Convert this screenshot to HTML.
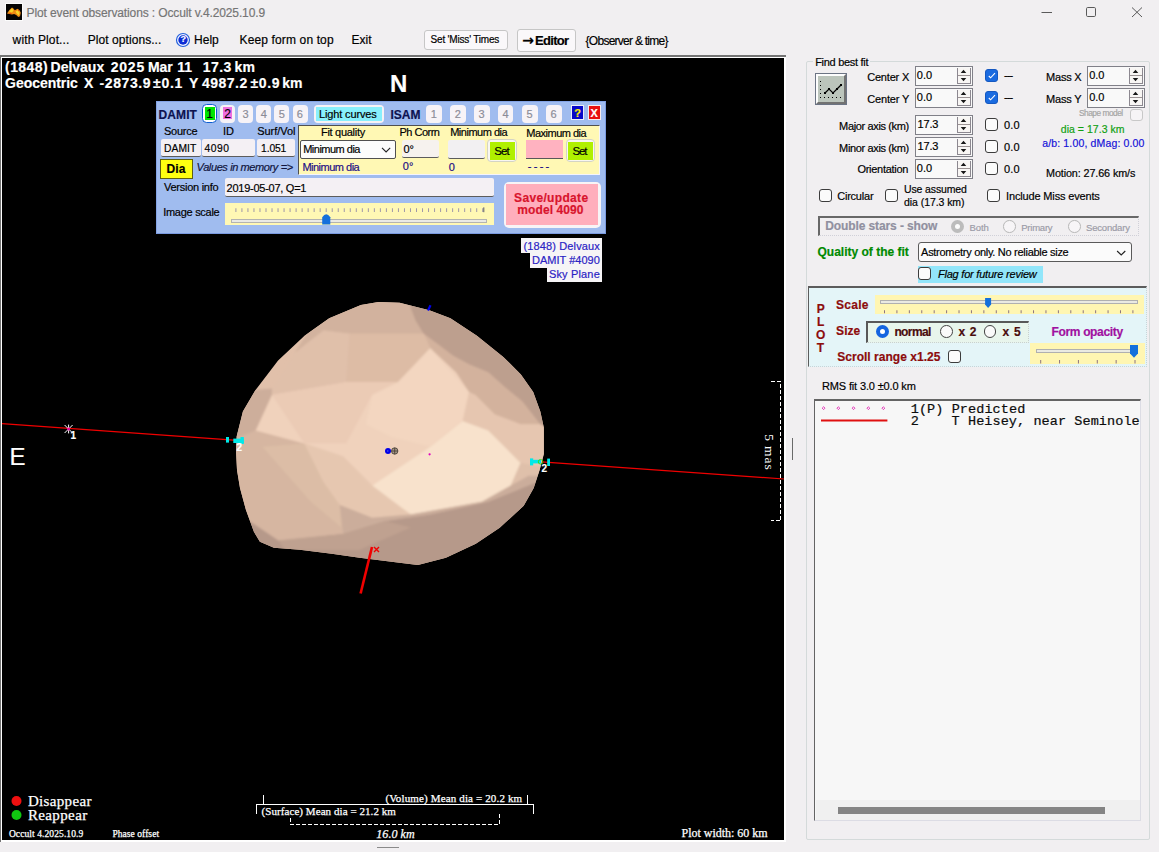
<!DOCTYPE html>
<html lang="en"><head><meta charset="utf-8"><title>Plot event observations : Occult v.4.2025.10.9</title>
<style>
html,body{margin:0;padding:0}
body{width:1159px;height:852px;overflow:hidden;background:#f1eff1;font-family:"Liberation Sans",sans-serif}
#win{position:absolute;left:0;top:0;width:1159px;height:852px;overflow:hidden;background:#f1eff1}
.t{position:absolute;white-space:pre;line-height:1;font-size:11px;color:#000;-webkit-text-stroke:0.18px currentColor}
.a{position:absolute;box-sizing:border-box}
svg{position:absolute;left:0;top:0;overflow:visible}
.num{background:#f9f9f9;border:1px solid #808088;}
.spin{background:#f8f6f4;border:1px solid #8c8890;border-top:none}
.cb{background:#fbfbfb;border:1px solid #3c3c3c;border-radius:3px;width:13px;height:13px}
.cbc{background:#1a6be0;border:1px solid #1558c0;border-radius:3px;width:13px;height:13px}
.rb{background:#fafafa;border:1px solid #444;border-radius:50%;width:13px;height:13px}
.fld{background:#f4f0f4;border-bottom:1.4px solid #5c5c5c;border-radius:2px}
.nb{background:#f7f3f7;border-radius:3px}
.t[style*="Serif"]{-webkit-text-stroke:0.25px currentColor}
.p{display:inline-block;width:0;height:0}

</style></head>
<body>
<div id="win">
<!-- title bar icon -->
<div class="a" style="left:5px;top:3px;width:18px;height:18px;background:#fcfcfc"></div><div class="a" style="left:6px;top:4px;width:16px;height:16px;background:#060404"></div>
<svg width="1159" height="852" viewBox="0 0 1159 852">
<path d="M7 13.4 L9.2 10.2 L12 7.4 L13.4 8.5 L14.8 10.2 L17.6 8.8 L19.7 10.6 L20.8 12.7 L20 16.2 L18.3 16.9 L16.2 15.1 L14.1 14.1 L12 14.4 L9.2 14.1 Z" fill="#f08c14"/>
<path d="M9 11.5 L12 8.2 L13.6 10.5 L12 12.5 Z M15.5 11.5 L18 10.2 L19.5 13 L18.8 15.4 L16.6 13.6 Z" fill="#f8d428"/>
<path d="M9 13.3 L11.5 13 L11.5 14 L9.4 13.9 Z M17.8 9.3 L19.4 10.7 L18.4 11.2 Z" fill="#e84810"/>
<!-- window controls -->
<path d="M1041.5 12.5 H1052" stroke="#5a5a5a" stroke-width="1" fill="none"/>
<rect x="1086.5" y="7.5" width="9" height="9" rx="1.2" stroke="#5a5a5a" stroke-width="1" fill="none"/>
<path d="M1132 7.5 L1142 17 M1142 7.5 L1132 17" stroke="#5a5a5a" stroke-width="1" fill="none"/>
<!-- help icon -->
<circle cx="183" cy="40" r="6.5" fill="#f4f6ff" stroke="#2460dc" stroke-width="1.2"/>
<circle cx="183" cy="40" r="4.7" fill="#0c2cd4"/>
</svg>
<span class="t" style="left:180.5px;top:35.3px;font-size:9px;font-weight:bold;color:#fff">?</span>
<!-- toolbar buttons -->
<div class="a" style="left:424px;top:30px;width:84px;height:20px;background:#faf8fa;border:1px solid #c6c6c6;border-radius:3px"></div>
<div class="a" style="left:517px;top:29px;width:59px;height:23px;background:#faf8fa;border:1px solid #c6c6c6;border-radius:3px"></div>
<!-- plot frame -->
<div class="a" style="left:0;top:55px;width:786px;height:787px;background:#fff;border-top:2px solid #747474;border-left:1px solid #747474"></div>
<div class="a" style="left:2px;top:58px;width:782px;height:782px;background:#000"></div>
<div class="a" style="left:377px;top:847px;width:22px;height:1px;background:#8a8a8a"></div>
<div class="a" style="left:792px;top:438px;width:1px;height:22px;background:#6a6a6a"></div>
<!-- plot graphics -->
<svg width="1159" height="852" viewBox="0 0 1159 852">
<defs>
<radialGradient id="ag" gradientUnits="userSpaceOnUse" cx="440" cy="440" r="190">
<stop offset="0" stop-color="#f8dcc6"/><stop offset="0.45" stop-color="#eeccb6"/><stop offset="0.8" stop-color="#dcb8a2"/><stop offset="1" stop-color="#c8a692"/>
</radialGradient>
<filter id="sf" x="-5%" y="-5%" width="110%" height="110%"><feGaussianBlur stdDeviation="0.9"/></filter>
<clipPath id="ac"><path id="ao" d="M378.5 302 L399.6 302.7 L429.3 310.3 L450.4 318.2 L476.9 335.8 L503.3 356.9 L520.9 374.5 L533.2 392.1 L540.3 411.5 L543.8 427.4 L543.8 454 L539.6 470 L533.7 487.9 L523.7 505.8 L499.7 527.8 L475.8 543.8 L445.9 557.7 L417.9 565.1 L399.6 562.7 L359.7 557.7 L331.8 553.7 L299.8 549.7 L273.9 547.7 L259.9 541.8 L253.9 531.8 L245.9 509.8 L240 487.9 L237 469.9 L236 450 L236.7 436.2 L242.9 411.5 L255.2 390.4 L278.1 360.4 L304.5 335.8 L329.2 318.2 L360.9 305 Z"/></clipPath>
</defs>
<!-- chord line -->
<path d="M2 423.7 L237 440.3 M538 461.6 L784 479" stroke="#f00000" stroke-width="1.2" fill="none"/>
<!-- asteroid -->
<use href="#ao" fill="#e1c0aa"/>
<g clip-path="url(#ac)"><g filter="url(#sf)">
<path d="M310.7 327.3 L359.2 295.0 L436.7 295.0 L436.7 343.4 L423.7 333.7 L349.5 333.7 L323.6 330.5 L294.6 353.1 Z" fill="#d2b29e"/>
<path d="M410.8 295.0 L552.9 295.0 L552.9 430.6 L540.0 424.2 L522.2 401.6 L504.5 387.0 L488.3 372.5 L468.9 364.4 L452.8 355.7 L436.7 343.4 L423.7 333.7 L415.7 320.8 L410.8 307.9 Z" fill="#bd9f8e"/>
<path d="M423.7 333.7 L436.7 343.4 L452.8 355.7 L468.9 364.4 L488.3 372.5 L504.5 387.0 L522.2 401.6 L540.0 424.2 L520.6 424.2 L494.8 414.5 L475.4 395.1 L468.9 391.9 L456.0 372.5 L430.2 348.3 Z" fill="#d3b29d"/>
<path d="M475.4 395.1 L494.8 414.5 L520.6 424.2 L540.0 424.2 L552.9 430.6 L552.9 469.4 L520.6 462.9 L488.3 430.6 L462.5 420.9 L468.9 391.9 Z" fill="#e6c6b0"/>
<path d="M272.0 388.6 L294.6 353.1 L323.6 330.5 L349.5 333.7 L346.2 382.2 L272.0 395.1 Z" fill="#e0c0aa"/>
<path d="M349.5 333.7 L423.7 333.7 L430.2 348.3 L397.9 382.2 L346.2 382.2 Z" fill="#ddbca5"/>
<path d="M230.0 443.5 L230.0 391.9 L272.0 388.6 L272.0 395.1 L255.8 430.6 L238.1 440.3 Z" fill="#cdae9b"/>
<path d="M230.0 440.3 L255.8 430.6 L304.3 443.5 L323.6 482.3 L339.8 504.9 L343.0 533.9 L278.4 540.4 L230.0 540.4 Z" fill="#d6b6a1"/>
<path d="M262.3 446.8 L304.3 443.5 L323.6 482.3 L339.8 504.9 L341.4 527.5 L310.7 501.7 Z" fill="#dcbda6"/>
<path d="M272.0 395.1 L346.2 382.2 L397.9 382.2 L430.2 348.3 L456.0 372.5 L468.9 391.9 L462.5 420.9 L430.2 446.8 L372.1 485.5 L343.0 456.4 L304.3 443.5 L255.8 430.6 Z" fill="#f0d2bc"/>
<path d="M346.2 382.2 L397.9 382.2 L372.1 395.1 L346.2 443.5 L304.3 443.5 L272.0 395.1 Z" fill="#ebcbb5"/>
<path d="M343.0 456.4 L372.1 485.5 L410.8 514.6 L372.1 517.8 L339.8 504.9 L323.6 482.3 L304.3 443.5 Z" fill="#e6c7b0"/>
<path d="M430.2 446.8 L462.5 420.9 L488.3 430.6 L520.6 462.9 L510.9 485.5 L481.9 501.7 L410.8 514.6 L372.1 485.5 Z" fill="#f8e2cc"/>
<path d="M520.6 462.9 L552.9 469.4 L552.9 475.8 L528.7 475.8 L510.9 485.5 Z" fill="#dfc0aa"/>
<path d="M372.1 395.1 L397.9 382.2 L430.2 348.3 L468.9 391.9 L462.5 420.9 L430.2 446.8 L391.4 437.1 L365.6 424.2 Z" fill="#f3d6c0"/>
<path d="M339.8 504.9 L372.1 517.8 L410.8 514.6 L481.9 501.7 L510.9 485.5 L528.7 475.8 L552.9 475.8 L552.9 488.7 L520.6 488.7 L488.3 501.7 L430.2 514.6 L385.0 521.0 L343.0 533.9 Z" fill="#cbad9b"/>
<path d="M249.4 521.0 L278.4 540.4 L343.0 533.9 L385.0 521.0 L430.2 514.6 L488.3 501.7 L520.6 488.7 L552.9 475.8 L552.9 585.6 L230.0 585.6 L230.0 521.0 Z" fill="#b6998a"/>
<path d="M278.4 540.4 L343.0 533.9 L385.0 521.0 L410.8 527.5 L359.2 550.1 L284.9 550.1 Z" fill="#bfa190"/>
</g></g>
<!-- markers -->
<path d="M428 310.5 L430.5 305.2" stroke="#0000f0" stroke-width="2.2"/>
<path d="M360.6 593.5 L372 547" stroke="#f00000" stroke-width="2.6"/>
<path d="M374 547 L379 552 M379 547 L374 552" stroke="#f00000" stroke-width="1.4"/>
<circle cx="388" cy="451" r="3" fill="#0000e8"/><circle cx="387.8" cy="451" r="0.7" fill="#5a6af0"/>
<circle cx="394.7" cy="451" r="3.2" fill="#a89888" stroke="#403830" stroke-width="0.8"/>
<path d="M391.5 451 H398 M394.7 447.8 V454.2" stroke="#403830" stroke-width="0.8"/>
<circle cx="429.6" cy="454.3" r="1.1" fill="#e000c0"/>
<!-- star 1 -->
<path d="M68.6 424.6 V433.4 M64.6 425 L72.6 433 M72.6 425 L64.6 433" stroke="#fff" stroke-width="1"/>
<circle cx="68.6" cy="429" r="1.5" fill="#f000a0"/>
<!-- cyan event bars -->
<rect x="226" y="437" width="3" height="5.6" fill="#00e8e8"/>
<rect x="233.3" y="438.6" width="10.5" height="4.4" fill="#00e8e8"/>
<rect x="240.5" y="437" width="3.3" height="7" fill="#00e8e8"/>
<rect x="530" y="459.8" width="11" height="3.6" fill="#00e8e8"/>
<rect x="530" y="458.4" width="3.2" height="7" fill="#00e8e8"/>
<rect x="547.2" y="458.6" width="2.8" height="7.4" fill="#00e8e8"/>
<circle cx="540.6" cy="461.8" r="2.3" fill="none" stroke="#30e000" stroke-width="1" opacity="0.85"/>
<!-- legend dots -->
<circle cx="16.5" cy="801" r="5" fill="#f01010"/>
<circle cx="16.5" cy="815" r="5" fill="#10c810"/>
<!-- scale bars -->
<g stroke="#fff" stroke-width="1" fill="none" shape-rendering="crispEdges">
<path d="M263 795 V804 M527 795 V804 M256 804.5 H534 M256.5 804 V814 M533.5 804 V814"/>
<path d="M290.5 818 V824.5 H499.5 V814" stroke-dasharray="4 2"/>
<path d="M770.5 381.5 H780.5 V520.5 H770.5" stroke-dasharray="4 2"/>
</g>
<text transform="translate(765.3,434.2) rotate(90)" font-family="'Liberation Serif',serif" font-size="13.5" fill="#fff" textLength="35.5" lengthAdjust="spacing">5 mas</text>
</svg>
<!-- sky plane label -->
<div class="a" style="left:521.4px;top:238.2px;width:80.2px;height:15.2px;background:#f6f4f6"></div>
<div class="a" style="left:530.1px;top:253.2px;width:71.5px;height:14.8px;background:#f6f4f6"></div>
<div class="a" style="left:546.5px;top:267.8px;width:55.1px;height:14.5px;background:#f6f4f6"></div>
<!-- DAMIT panel -->
<div class="a" style="left:156px;top:101px;width:450px;height:133px;background:#a0bcef;border:1px solid #84a4e6;border-right-color:#7a9ae0;border-bottom-color:#7a9ae0"></div>
<div class="a" style="left:202px;top:104.3px;width:15.3px;height:18.5px;background:#fff;border:1.6px solid #0c5cd0;border-radius:4.5px"></div>
<div class="a" style="left:205px;top:107px;width:10.1px;height:12.8px;background:#00e400"></div>
<div class="a" style="left:220.3px;top:104.5px;width:14.8px;height:18.2px;background:#f6f2f6;border-radius:4px"></div>
<div class="a" style="left:223.1px;top:107.3px;width:9.3px;height:12.2px;background:#ee6ee0"></div>
<div class="a nb" style="left:238.2px;top:104.5px;width:15.1px;height:18.2px;border-radius:4px"></div>
<div class="a nb" style="left:256.4px;top:104.5px;width:15.1px;height:18.2px;border-radius:4px"></div>
<div class="a nb" style="left:274.4px;top:104.5px;width:15.1px;height:18.2px;border-radius:4px"></div>
<div class="a nb" style="left:292.5px;top:104.5px;width:15.1px;height:18.2px;border-radius:4px"></div>
<div class="a" style="left:313.5px;top:104.5px;width:70.8px;height:18.3px;background:#f6f2f6;border-radius:4px"></div>
<div class="a" style="left:316px;top:107px;width:66.4px;height:14px;background:#88f0fc"></div>
<div class="a nb" style="left:426.2px;top:104.5px;width:15.7px;height:18.2px;border-radius:4px"></div>
<div class="a nb" style="left:450.2px;top:104.5px;width:15.7px;height:18.2px;border-radius:4px"></div>
<div class="a nb" style="left:473.9px;top:104.5px;width:15.7px;height:18.2px;border-radius:4px"></div>
<div class="a nb" style="left:497.8px;top:104.5px;width:15.7px;height:18.2px;border-radius:4px"></div>
<div class="a nb" style="left:522px;top:104.5px;width:15.7px;height:18.2px;border-radius:4px"></div>
<div class="a nb" style="left:545.9px;top:104.5px;width:15.7px;height:18.2px;border-radius:4px"></div>
<div class="a" style="left:571.2px;top:105px;width:13.2px;height:15px;background:#0808c8;border:1px solid #ececf8"></div>
<div class="a" style="left:587.6px;top:105px;width:13.6px;height:15px;background:#e81010;border:1px solid #f8ecec"></div>
<!-- yellow sub panel -->
<div class="a" style="left:297.7px;top:125.4px;width:302.4px;height:49.6px;background:#fff8b4;border-left:1.8px solid #505050;border-top:1.8px solid #505050;border-right:1.5px solid #f4f4fc;border-bottom:1.3px solid #f4f4fc"></div>
<div class="a fld" style="left:161px;top:138.7px;width:39.5px;height:18.3px;"></div>
<div class="a fld" style="left:202px;top:138.7px;width:53.3px;height:18.3px;"></div>
<div class="a fld" style="left:257.3px;top:138.7px;width:37.9px;height:18.3px;"></div>
<div class="a" style="left:300.3px;top:139.6px;width:96.1px;height:19.7px;background:#fcfcfc;border:1px solid #505050;border-radius:2px"></div>
<div class="a fld" style="left:401.7px;top:139.6px;width:37.7px;height:18.4px;background:#f6f2ee"></div>
<div class="a fld" style="left:447.8px;top:139.6px;width:37.5px;height:19px;background:#f2f0f2"></div>
<div class="a" style="left:487.4px;top:139.2px;width:29.9px;height:23.3px;background:#f8f6f2;border:1px solid #d4d4c4;border-radius:4px"></div>
<div class="a" style="left:490px;top:141.8px;width:25.3px;height:18px;background:#b0f000"></div>
<div class="a" style="left:526.2px;top:140.2px;width:36.5px;height:18.6px;background:#ffb2c0;border-bottom:1.4px solid #585858"></div>
<div class="a" style="left:565.5px;top:139.2px;width:29.8px;height:23.3px;background:#f8f6f2;border:1px solid #d4d4c4;border-radius:4px"></div>
<div class="a" style="left:568.1px;top:141.8px;width:24.9px;height:18px;background:#b0f000"></div>
<div class="a" style="left:159.5px;top:158.6px;width:33.7px;height:20.2px;background:#ffff10;border:1px solid #606010"></div>
<div class="a fld" style="left:224.7px;top:178.4px;width:268.9px;height:18.2px;"></div>
<div class="a" style="left:225px;top:203.3px;width:269px;height:21.7px;background:#fff8b4"></div>
<div class="a" style="left:231.2px;top:219.4px;width:255.4px;height:4.1px;background:#eaeae4;border:1px solid #b4b4b0"></div>
<div class="a" style="left:503.7px;top:181.6px;width:97px;height:46.1px;background:#f8f4f6;border-radius:5px"></div>
<div class="a" style="left:506px;top:183.9px;width:92.1px;height:41.5px;background:#ffaebc"></div>
<svg width="1159" height="852" viewBox="0 0 1159 852">
<path d="M382 147.8 L386.1 152 L390.2 147.8" stroke="#222" stroke-width="1.1" fill="none"/>
<path d="M322.2 224.6 V217.2 Q326.2 211.5 330.3 217.2 V224.6 Z" fill="#1470dc"/>
<path d="M235.4 210.2 H483" stroke="#a098a8" stroke-width="3.8" stroke-dasharray="1 5.02" fill="none"/>
<path d="M483.8 207.4 V212.2" stroke="#55556a" stroke-width="1"/>
</svg>
<!-- right panel group box -->
<div class="a" style="left:806px;top:61px;width:344px;height:779px;border:1px solid #d4dada;border-radius:2px"></div>
<div class="a" style="left:813px;top:56px;width:57px;height:12px;background:#f1eff1"></div>
<!-- fit button -->
<div class="a" style="left:815px;top:73px;width:32px;height:32px;background:#6c7484"></div><div class="a" style="left:816px;top:74px;width:30px;height:30px;background:#bcc5bc;border:2px solid;border-color:#fdfdfd #727272 #727272 #fdfdfd"></div>
<!-- numeric boxes -->
<div class="a num" style="left:915px;top:66px;width:58px;height:20px;"></div>
<div class="a spin" style="left:957px;top:68px;width:14px;height:16px;"></div>
<div class="a" style="left:958px;top:75px;width:12px;height:1px;background:#9c9494"></div>
<div class="a num" style="left:915px;top:88px;width:58px;height:20px;"></div>
<div class="a spin" style="left:957px;top:90px;width:14px;height:16px;"></div>
<div class="a" style="left:958px;top:97px;width:12px;height:1px;background:#9c9494"></div>
<div class="a num" style="left:915px;top:115px;width:58px;height:20px;"></div>
<div class="a spin" style="left:957px;top:117px;width:14px;height:16px;"></div>
<div class="a" style="left:958px;top:124px;width:12px;height:1px;background:#9c9494"></div>
<div class="a num" style="left:915px;top:137px;width:58px;height:20px;"></div>
<div class="a spin" style="left:957px;top:139px;width:14px;height:16px;"></div>
<div class="a" style="left:958px;top:146px;width:12px;height:1px;background:#9c9494"></div>
<div class="a num" style="left:915px;top:159px;width:58px;height:20px;"></div>
<div class="a spin" style="left:957px;top:161px;width:14px;height:16px;"></div>
<div class="a" style="left:958px;top:168px;width:12px;height:1px;background:#9c9494"></div>
<div class="a num" style="left:1087px;top:66px;width:58px;height:20px;"></div>
<div class="a spin" style="left:1129px;top:68px;width:14px;height:16px;"></div>
<div class="a" style="left:1130px;top:75px;width:12px;height:1px;background:#9c9494"></div>
<div class="a num" style="left:1087px;top:88px;width:58px;height:20px;"></div>
<div class="a spin" style="left:1129px;top:90px;width:14px;height:16px;"></div>
<div class="a" style="left:1130px;top:97px;width:12px;height:1px;background:#9c9494"></div>
<!-- checkboxes -->
<div class="a cbc" style="left:985px;top:69px;width:13px;height:13px;"></div>
<div class="a cbc" style="left:985px;top:91px;width:13px;height:13px;"></div>
<div class="a cb" style="left:985px;top:118px;width:13px;height:13px;"></div>
<div class="a cb" style="left:985px;top:140px;width:13px;height:13px;"></div>
<div class="a cb" style="left:985px;top:162px;width:13px;height:13px;"></div>
<div class="a cb" style="left:1130.4px;top:108.8px;width:12.6px;height:12px;border-color:#c8c8c8;background:#f6f4f6"></div>
<div class="a cb" style="left:819px;top:189px;width:13px;height:13px;"></div>
<div class="a cb" style="left:885px;top:189px;width:13px;height:13px;"></div>
<div class="a cb" style="left:987px;top:189px;width:13px;height:13px;"></div>
<!-- double stars box -->
<div class="a" style="left:817.5px;top:215.5px;width:321.5px;height:20px;border-top:2px solid #686868;border-left:2px solid #686868;border-right:1px dotted #d0d0d8;border-bottom:1px dotted #d0d0d8"></div>
<div class="a rb" style="left:950.7px;top:220.1px;width:13px;height:13px;border:4px solid #bcbcbc;background:#fcfcfc"></div>
<div class="a rb" style="left:1003.2px;top:220px;width:12.6px;height:12.6px;border-color:#b8b8b8;background:#f7f5f7"></div>
<div class="a rb" style="left:1068.1px;top:220px;width:12.6px;height:12.6px;border-color:#b8b8b8;background:#f7f5f7"></div>
<!-- quality combo -->
<div class="a" style="left:918.4px;top:242px;width:213.2px;height:20.4px;background:#fbfbfb;border:1px solid #5a5a5a;border-radius:3px"></div>
<div class="a" style="left:918px;top:266px;width:125px;height:16.5px;background:#92e6fa"></div>
<div class="a cb" style="left:918.4px;top:267.2px;width:12.6px;height:12.6px;"></div>
<!-- PLOT panel -->
<div class="a" style="left:808.4px;top:286.3px;width:338.4px;height:81.2px;background:#e4f5f8;border-top:2px solid #5c5c5c;border-left:1.6px solid #5c5c5c;border-right:1px dotted #c8d4d8;border-bottom:1px dotted #c8d4d8"></div>
<div class="a" style="left:875.2px;top:295.2px;width:268.8px;height:18.4px;background:#fff6b2"></div>
<div class="a" style="left:880px;top:299.8px;width:258.2px;height:4.6px;background:#eaeae2;border:1px solid #b0b0b0"></div>
<div class="a" style="left:866.3px;top:320.5px;width:162.6px;height:22px;background:#e8f5ec;border-top:2px solid #585858;border-left:2px solid #585858;border-right:1px dotted #c8d0d0;border-bottom:1px dotted #c8d0d0"></div>
<div class="a rb" style="left:875.8px;top:325.2px;width:13px;height:13px;background:#fff;border:4px solid #1464e0"></div>
<div class="a rb" style="left:940px;top:325.4px;width:12.6px;height:12.6px;"></div>
<div class="a rb" style="left:983.9px;top:325.4px;width:12.6px;height:12.6px;"></div>
<div class="a cb" style="left:948.2px;top:350.4px;width:12.6px;height:12.6px;"></div>
<div class="a" style="left:1029.8px;top:343px;width:114.8px;height:21px;background:#fff6b2"></div>
<div class="a" style="left:1036px;top:348.8px;width:101.6px;height:4.4px;background:#eaeae2;border:1px solid #b0b0b0"></div>
<!-- list box -->
<div class="a" style="left:814.3px;top:399.2px;width:326.7px;height:422px;background:#f7f7f7;border-top:2px solid #646464;border-left:1.8px solid #646464;border-right:1px solid #dcdce4;border-bottom:1px solid #dcdce4"></div>
<div class="a" style="left:816.2px;top:800px;width:324px;height:20px;background:#f0f0f0"></div>
<div class="a" style="left:838.3px;top:807px;width:266.8px;height:7px;background:#848484"></div>
<svg width="1159" height="852" viewBox="0 0 1159 852">
<g fill="#000" shape-rendering="crispEdges"><path d="M820 81 h1 v1 h-1z M820 85 h1 v1 h-1z M820 89 h1 v1 h-1z M820 93 h1 v1 h-1z M820 97 h1 v1 h-1z M824 97 h1 v1 h-1z M828 97 h1 v1 h-1z M832 97 h1 v1 h-1z M836 97 h1 v1 h-1z M840 97 h1 v1 h-1z M824 92 h2 v2 h-2z M828 88 h2 v2 h-2z M832 92 h2 v2 h-2z M836 88 h2 v2 h-2z M840 84 h2 v2 h-2z "/></g>
<path d="M825 93 L829 89 L833 93 L837 89 L841 85" stroke="#000" stroke-width="1.2" fill="none"/>
<g fill="#181818">
<path d="M960.7 73 L963.5 69.8 L966.3 73 Z M960.7 78 L963.5 81.2 L966.3 78 Z"/>
<path d="M960.7 95 L963.5 91.8 L966.3 95 Z M960.7 100 L963.5 103.2 L966.3 100 Z"/>
<path d="M960.7 122 L963.5 118.8 L966.3 122 Z M960.7 127 L963.5 130.2 L966.3 127 Z"/>
<path d="M960.7 144 L963.5 140.8 L966.3 144 Z M960.7 149 L963.5 152.2 L966.3 149 Z"/>
<path d="M960.7 166 L963.5 162.8 L966.3 166 Z M960.7 171 L963.5 174.2 L966.3 171 Z"/>
<path d="M1132.7 73 L1135.5 69.8 L1138.3 73 Z M1132.7 78 L1135.5 81.2 L1138.3 78 Z"/>
<path d="M1132.7 95 L1135.5 91.8 L1138.3 95 Z M1132.7 100 L1135.5 103.2 L1138.3 100 Z"/>
</g>
<path d="M988.8 76 L990.6 77.8 L995 73.2 M988.8 98 L990.6 99.8 L995 95.2" stroke="#fff" stroke-width="1.1" fill="none"/>
<path d="M1117.1 251 L1121.2 255 L1125.3 251" stroke="#222" stroke-width="1.1" fill="none"/>
<path d="M985.1 298 H991.1 V304.6 L988.1 308 L985.1 304.6 Z" fill="#1470dc"/>
<path d="M884 311.8 H1137" stroke="#8c7480" stroke-width="3" stroke-dasharray="1 11.42" fill="none"/>
<path d="M1130 345 H1138 V353.6 L1134 357.8 L1130 353.6 Z" fill="#1470dc"/>
<path d="M1040.2 361.8 H1136" stroke="#8c7480" stroke-width="3.4" stroke-dasharray="1 17.86" fill="none"/>
<g fill="none" stroke="#e020b0" stroke-width="0.9"><path d="M822.2 408.2 L823.6 406.8 L825.0 408.2 L823.6 409.6 Z"/><path d="M837.0 408.2 L838.4 406.8 L839.8 408.2 L838.4 409.6 Z"/><path d="M852.1 408.2 L853.5 406.8 L854.9 408.2 L853.5 409.6 Z"/><path d="M867.0 408.2 L868.4 406.8 L869.8 408.2 L868.4 409.6 Z"/><path d="M882.0 408.2 L883.4 406.8 L884.8 408.2 L883.4 409.6 Z"/></g>
<path d="M821 420.5 H887.4" stroke="#e01010" stroke-width="2"/>
</svg>

<span class="t" style='left:26.6px;top:7.0px;font-size:12px;color:#757575;letter-spacing:-0.12px;'>Plot event observations : Occult v.4.2025.10.9</span>
<span class="t" style='left:12.6px;top:34.0px;font-size:12px;letter-spacing:0.13px;'>with Plot...</span>
<span class="t" style='left:87.8px;top:34.0px;font-size:12px;letter-spacing:0.06px;'>Plot options...</span>
<span class="t" style='left:194.1px;top:34.0px;font-size:12px;'>Help</span>
<span class="t" style='left:239.6px;top:34.0px;font-size:12px;letter-spacing:0.13px;'>Keep form on top</span>
<span class="t" style='left:351.6px;top:34.0px;font-size:12px;letter-spacing:-0.01px;'>Exit</span>
<span class="t" style='left:430.6px;top:35.0px;font-size:10px;letter-spacing:-0.19px;'>Set 'Miss' Times</span>
<span class="t" style='left:522.2px;top:33.0px;font-size:14px;font-family:"DejaVu Sans","Liberation Sans",sans-serif;font-weight:bold;'>→</span>
<span class="t" style='left:535.1px;top:34.0px;font-size:13px;font-weight:bold;letter-spacing:-0.73px;'>Editor</span>
<span class="t" style='left:585.6px;top:35.0px;font-size:12px;letter-spacing:-0.74px;'>{Observer &amp; time}</span>
<span class="t" style='left:5.1px;top:60.1px;font-size:14px;font-weight:bold;color:#fff;letter-spacing:0.41px;'>(1848)</span>
<span class="t" style='left:50.6px;top:60.1px;font-size:14px;font-weight:bold;color:#fff;letter-spacing:-0.02px;'>Delvaux</span>
<span class="t" style='left:110.8px;top:60.1px;font-size:14px;font-weight:bold;color:#fff;letter-spacing:0.75px;'>2025</span>
<span class="t" style='left:148.1px;top:60.1px;font-size:14px;font-weight:bold;color:#fff;letter-spacing:-0.20px;'>Mar</span>
<span class="t" style='left:177.2px;top:60.1px;font-size:14px;font-weight:bold;color:#fff;'>11</span>
<span class="t" style='left:202.8px;top:60.1px;font-size:14px;font-weight:bold;color:#fff;letter-spacing:0.45px;'>17.3</span>
<span class="t" style='left:234.6px;top:60.1px;font-size:14px;font-weight:bold;color:#fff;'>km</span>
<span class="t" style='left:5.1px;top:76.1px;font-size:14px;font-weight:bold;color:#fff;letter-spacing:-0.04px;'>Geocentric</span>
<span class="t" style='left:83.9px;top:76.1px;font-size:14px;font-weight:bold;color:#fff;'>X</span>
<span class="t" style='left:99.6px;top:76.1px;font-size:14px;font-weight:bold;color:#fff;letter-spacing:0.59px;'>-2873.9</span>
<span class="t" style='left:153.1px;top:76.1px;font-size:14px;font-weight:bold;color:#fff;letter-spacing:0.71px;'>±0.1</span>
<span class="t" style='left:189.0px;top:76.1px;font-size:14px;font-weight:bold;color:#fff;'>Y</span>
<span class="t" style='left:202.1px;top:76.1px;font-size:14px;font-weight:bold;color:#fff;letter-spacing:0.47px;'>4987.2</span>
<span class="t" style='left:250.4px;top:76.1px;font-size:14px;font-weight:bold;color:#fff;letter-spacing:0.68px;'>±0.9</span>
<span class="t" style='left:282.2px;top:76.1px;font-size:14px;font-weight:bold;color:#fff;'>km</span>
<span class="t" style='left:389.9px;top:72.0px;font-size:24px;font-weight:bold;color:#fff;'>N</span>
<span class="t" style='left:9.6px;top:445.0px;font-size:24px;color:#fff;'>E</span>
<span class="t" style='left:27.9px;top:794.0px;font-size:15px;font-family:"Liberation Serif",serif;color:#fff;letter-spacing:0.34px;'>Disappear</span>
<span class="t" style='left:27.9px;top:808.0px;font-size:15px;font-family:"Liberation Serif",serif;color:#fff;letter-spacing:0.38px;'>Reappear</span>
<span class="t" style='left:8.9px;top:830.1px;font-size:9.5px;font-family:"Liberation Serif",serif;color:#fff;letter-spacing:0.09px;'>Occult 4.2025.10.9</span>
<span class="t" style='left:112.4px;top:830.1px;font-size:9.5px;font-family:"Liberation Serif",serif;color:#fff;letter-spacing:0.06px;'>Phase offset</span>
<span class="t" style='left:385.4px;top:793.0px;font-size:11px;font-family:"Liberation Serif",serif;color:#fff;letter-spacing:0.14px;'>(Volume) Mean dia = 20.2 km</span>
<span class="t" style='left:261.6px;top:806.0px;font-size:11px;font-family:"Liberation Serif",serif;color:#fff;letter-spacing:0.06px;'>(Surface) Mean dia = 21.2 km</span>
<span class="t" style='left:376.3px;top:828.0px;font-size:12px;font-family:"Liberation Serif",serif;font-style:italic;color:#fff;letter-spacing:0.05px;'>16.0 km</span>
<span class="t" style='left:681.6px;top:827.0px;font-size:12px;font-family:"Liberation Serif",serif;color:#fff;letter-spacing:-0.02px;'>Plot width: 60 km</span>
<span class="t" style='left:70.4px;top:431.0px;font-size:10px;font-weight:bold;color:#fff;'>1</span>
<span class="t" style='left:236.6px;top:443.0px;font-size:10px;font-weight:bold;color:#fff;'>2</span>
<span class="t" style='left:541.6px;top:464.0px;font-size:10px;font-weight:bold;color:#fff;'>2</span>
<span class="t" style='left:523.4px;top:241.0px;font-size:11px;color:#2a22c4;letter-spacing:0.14px;'>(1848) Delvaux</span>
<span class="t" style='left:532.1px;top:255.0px;font-size:11px;color:#2a22c4;'>DAMIT #4090</span>
<span class="t" style='left:548.9px;top:269.0px;font-size:11px;color:#2a22c4;letter-spacing:0.17px;'>Sky Plane</span>
<span class="t" style='left:158.6px;top:109.0px;font-size:12px;font-weight:bold;color:#0c1250;letter-spacing:0.08px;'>DAMIT</span>
<span class="t" style='left:206.2px;top:108.0px;font-size:12px;'>1</span>
<span class="t" style='left:224.2px;top:108.0px;font-size:12px;'>2</span>
<span class="t" style='left:242.5px;top:109.0px;font-size:11px;color:#8c8c98;'>3</span>
<span class="t" style='left:260.7px;top:109.0px;font-size:11px;color:#8c8c98;'>4</span>
<span class="t" style='left:278.7px;top:109.0px;font-size:11px;color:#8c8c98;'>5</span>
<span class="t" style='left:296.8px;top:109.0px;font-size:11px;color:#8c8c98;'>6</span>
<span class="t" style='left:319.0px;top:109.0px;font-size:11px;letter-spacing:-0.14px;'>Light curves</span>
<span class="t" style='left:390.4px;top:109.0px;font-size:12px;font-weight:bold;color:#0c1250;letter-spacing:0.07px;'>ISAM</span>
<span class="t" style='left:430.8px;top:109.0px;font-size:11px;color:#8c8c98;'>1</span>
<span class="t" style='left:454.8px;top:109.0px;font-size:11px;color:#8c8c98;'>2</span>
<span class="t" style='left:478.5px;top:109.0px;font-size:11px;color:#8c8c98;'>3</span>
<span class="t" style='left:502.4px;top:109.0px;font-size:11px;color:#8c8c98;'>4</span>
<span class="t" style='left:526.6px;top:109.0px;font-size:11px;color:#8c8c98;'>5</span>
<span class="t" style='left:550.5px;top:109.0px;font-size:11px;color:#8c8c98;'>6</span>
<span class="t" style='left:574.2px;top:108.0px;font-size:11px;font-weight:bold;color:#ffee00;'>?</span>
<span class="t" style='left:590.6px;top:108.0px;font-size:11px;font-weight:bold;color:#fff;'>X</span>
<span class="t" style='left:164.0px;top:126.0px;font-size:11px;letter-spacing:-0.25px;'>Source</span>
<span class="t" style='left:223.0px;top:126.0px;font-size:11px;'>ID</span>
<span class="t" style='left:257.2px;top:126.0px;font-size:11px;letter-spacing:-0.03px;'>Surf/Vol</span>
<span class="t" style='left:321.0px;top:127.0px;font-size:11px;letter-spacing:-0.29px;'>Fit quality</span>
<span class="t" style='left:399.4px;top:127.0px;font-size:11px;letter-spacing:-0.49px;'>Ph Corrn</span>
<span class="t" style='left:450.2px;top:127.0px;font-size:11px;letter-spacing:-0.49px;'>Minimum dia</span>
<span class="t" style='left:526.3px;top:128.0px;font-size:11px;letter-spacing:-0.51px;'>Maximum dia</span>
<span class="t" style='left:164.0px;top:144.0px;font-size:10.3px;letter-spacing:0.04px;'>DAMIT</span>
<span class="t" style='left:204.4px;top:144.0px;font-size:10.3px;letter-spacing:0.56px;'>4090</span>
<span class="t" style='left:261.1px;top:144.0px;font-size:10.3px;letter-spacing:-0.15px;'>1.051</span>
<span class="t" style='left:303.2px;top:144.0px;font-size:11px;letter-spacing:-0.51px;'>Minimum dia</span>
<span class="t" style='left:403.5px;top:144.0px;font-size:11px;'>0°</span>
<span class="t" style='left:494.3px;top:146.0px;font-size:11.5px;letter-spacing:-0.93px;'>Set</span>
<span class="t" style='left:572.4px;top:146.0px;font-size:11.5px;letter-spacing:-1.13px;'>Set</span>
<span class="t" style='left:166.4px;top:163.0px;font-size:12px;font-weight:bold;letter-spacing:0.21px;'>Dia</span>
<span class="t" style='left:196.6px;top:162.0px;font-size:11px;font-style:italic;color:#10143c;letter-spacing:-0.39px;'>Values in memory =&gt;</span>
<span class="t" style='left:302.4px;top:162.0px;font-size:11px;color:#1c0c84;letter-spacing:-0.50px;'>Minimum dia</span>
<span class="t" style='left:402.8px;top:161.0px;font-size:11px;color:#1c0c84;'>0°</span>
<span class="t" style='left:448.8px;top:162.0px;font-size:11px;color:#1c0c84;'>0</span>
<span class="t" style='left:527.8px;top:161.0px;font-size:11px;color:#1c0c84;letter-spacing:-0.39px;'>- - - -</span>
<span class="t" style='left:164.0px;top:182.0px;font-size:11px;letter-spacing:-0.26px;'>Version info</span>
<span class="t" style='left:226.6px;top:183.0px;font-size:11px;letter-spacing:-0.26px;'>2019-05-07, Q=1</span>
<span class="t" style='left:163.2px;top:207.0px;font-size:11px;letter-spacing:-0.28px;'>Image scale</span>
<span class="t" style='left:514.1px;top:192.0px;font-size:12px;font-weight:bold;color:#d8142c;letter-spacing:0.33px;'>Save/update</span>
<span class="t" style='left:517.3px;top:204.0px;font-size:12px;font-weight:bold;color:#d8142c;letter-spacing:0.09px;'>model 4090</span>
<span class="t" style='left:815.2px;top:57.0px;font-size:11px;letter-spacing:-0.30px;'>Find best fit</span>
<span class="t" style='left:867.2px;top:72.0px;font-size:11px;letter-spacing:-0.19px;'>Center X</span>
<span class="t" style='left:867.2px;top:94.0px;font-size:11px;letter-spacing:-0.16px;'>Center Y</span>
<span class="t" style='left:916.7px;top:70.0px;font-size:11px;letter-spacing:0.10px;'>0.0</span>
<span class="t" style='left:916.7px;top:92.0px;font-size:11px;letter-spacing:0.10px;'>0.0</span>
<span class="t" style='left:1004.1px;top:70.0px;font-size:11px;letter-spacing:-0.90px;'>---</span>
<span class="t" style='left:1004.1px;top:92.0px;font-size:11px;letter-spacing:-0.90px;'>---</span>
<span class="t" style='left:1046.0px;top:72.0px;font-size:11px;letter-spacing:-0.20px;'>Mass X</span>
<span class="t" style='left:1046.0px;top:94.0px;font-size:11px;letter-spacing:-0.16px;'>Mass Y</span>
<span class="t" style='left:1089.2px;top:70.0px;font-size:11px;'>0.0</span>
<span class="t" style='left:1089.2px;top:92.0px;font-size:11px;'>0.0</span>
<span class="t" style='left:1079.0px;top:109.0px;font-size:8.3px;color:#a4a4a4;letter-spacing:-0.47px;'>Shape model</span>
<span class="t" style='left:839.1px;top:121.0px;font-size:11px;letter-spacing:-0.36px;'>Major axis (km)</span>
<span class="t" style='left:917.5px;top:119.0px;font-size:11px;letter-spacing:-0.17px;'>17.3</span>
<span class="t" style='left:1004.1px;top:120.0px;font-size:11px;letter-spacing:0.10px;'>0.0</span>
<span class="t" style='left:1060.8px;top:124.0px;font-size:10.5px;color:#10a010;letter-spacing:0.03px;'>dia = 17.3 km</span>
<span class="t" style='left:839.1px;top:143.0px;font-size:11px;letter-spacing:-0.36px;'>Minor axis (km)</span>
<span class="t" style='left:917.5px;top:141.0px;font-size:11px;letter-spacing:-0.17px;'>17.3</span>
<span class="t" style='left:1004.1px;top:142.0px;font-size:11px;letter-spacing:0.10px;'>0.0</span>
<span class="t" style='left:1042.2px;top:138.0px;font-size:10.5px;color:#1410d8;letter-spacing:0.15px;'>a/b: 1.00, dMag: 0.00</span>
<span class="t" style='left:857.4px;top:164.0px;font-size:11px;letter-spacing:-0.28px;'>Orientation</span>
<span class="t" style='left:916.7px;top:163.0px;font-size:11px;letter-spacing:0.10px;'>0.0</span>
<span class="t" style='left:1004.1px;top:164.0px;font-size:11px;letter-spacing:0.10px;'>0.0</span>
<span class="t" style='left:1046.0px;top:168.0px;font-size:10.8px;letter-spacing:-0.11px;'>Motion: 27.66 km/s</span>
<span class="t" style='left:837.2px;top:191.0px;font-size:11px;letter-spacing:-0.22px;'>Circular</span>
<span class="t" style='left:904.0px;top:184.0px;font-size:10.5px;letter-spacing:-0.13px;'>Use assumed</span>
<span class="t" style='left:904.0px;top:197.0px;font-size:10.5px;letter-spacing:-0.06px;'>dia (17.3 km)</span>
<span class="t" style='left:1006.1px;top:191.0px;font-size:11px;letter-spacing:-0.16px;'>Include Miss events</span>
<span class="t" style='left:825.3px;top:220.0px;font-size:12px;font-weight:bold;color:#9090a0;letter-spacing:-0.11px;'>Double stars - show</span>
<span class="t" style='left:969.6px;top:223.0px;font-size:9.5px;color:#9c9ca8;letter-spacing:-0.08px;'>Both</span>
<span class="t" style='left:1021.2px;top:223.0px;font-size:9.5px;color:#9c9ca8;letter-spacing:-0.22px;'>Primary</span>
<span class="t" style='left:1086.0px;top:223.0px;font-size:9.5px;color:#9c9ca8;letter-spacing:-0.19px;'>Secondary</span>
<span class="t" style='left:817.5px;top:246.0px;font-size:12px;font-weight:bold;color:#008a00;'>Quality of the fit</span>
<span class="t" style='left:921.1px;top:247.0px;font-size:11px;letter-spacing:-0.29px;'>Astrometry only. No reliable size</span>
<span class="t" style='left:937.9px;top:269.0px;font-size:11px;font-style:italic;letter-spacing:-0.21px;'>Flag for future review</span>
<span class="t" style='left:816.7px;top:303.0px;font-size:12px;font-weight:bold;color:#8c0c0c;'>P</span>
<span class="t" style='left:816.9px;top:316.0px;font-size:12px;font-weight:bold;color:#8c0c0c;'>L</span>
<span class="t" style='left:816.1px;top:329.0px;font-size:12px;font-weight:bold;color:#8c0c0c;'>O</span>
<span class="t" style='left:816.7px;top:342.0px;font-size:12px;font-weight:bold;color:#8c0c0c;'>T</span>
<span class="t" style='left:836.1px;top:299.0px;font-size:12px;font-weight:bold;color:#8c0c0c;letter-spacing:0.26px;'>Scale</span>
<span class="t" style='left:836.1px;top:325.0px;font-size:12px;font-weight:bold;color:#8c0c0c;letter-spacing:0.06px;'>Size</span>
<span class="t" style='left:894.4px;top:326.0px;font-size:12px;font-weight:bold;color:#4a0c0c;letter-spacing:-0.60px;'>normal</span>
<span class="t" style='left:958.4px;top:326.0px;font-size:12px;font-weight:bold;color:#4a0c0c;letter-spacing:0.66px;'>x 2</span>
<span class="t" style='left:1002.6px;top:326.0px;font-size:12px;font-weight:bold;color:#4a0c0c;letter-spacing:0.66px;'>x 5</span>
<span class="t" style='left:1051.5px;top:326.0px;font-size:12px;font-weight:bold;color:#a010a0;letter-spacing:-0.34px;'>Form opacity</span>
<span class="t" style='left:837.2px;top:351.0px;font-size:12px;font-weight:bold;color:#8c0c0c;letter-spacing:0.03px;'>Scroll range x1.25</span>
<span class="t" style='left:822.0px;top:381.0px;font-size:11px;letter-spacing:-0.15px;'>RMS fit 3.0 ±0.0 km</span>
<span class="t" style='left:910.7px;top:403.0px;font-size:13.5px;font-family:"Liberation Mono",monospace;color:#0c0c0c;letter-spacing:0.09px;-webkit-text-stroke:0.2px #0c0c0c;'>1(P) Predicted</span>
<span class="t" style='left:910.7px;top:415.0px;font-size:13.5px;font-family:"Liberation Mono",monospace;color:#0c0c0c;letter-spacing:0.08px;-webkit-text-stroke:0.2px #0c0c0c;'>2    T Heisey, near Seminole</span>
</div>
</body></html>
